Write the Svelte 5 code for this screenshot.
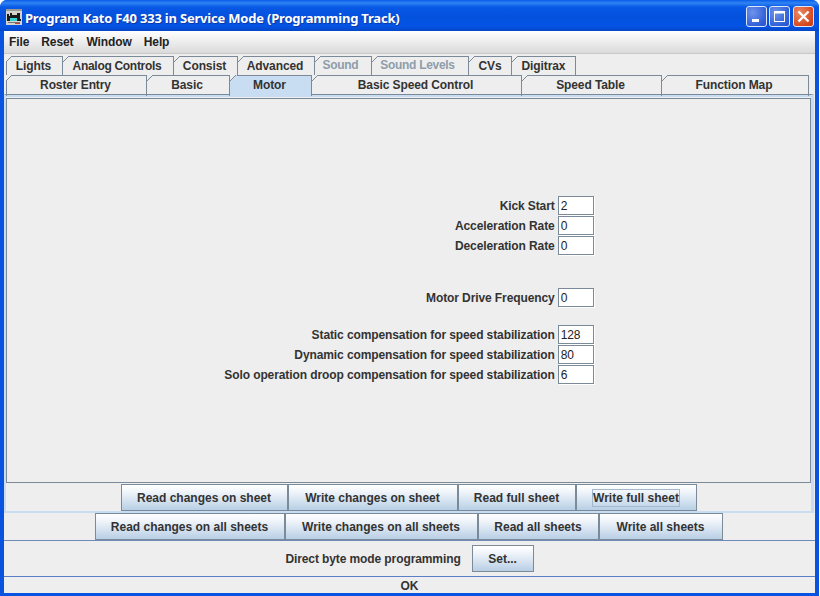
<script>
  const menus = ['File', 'Reset', 'Window', 'Help'];
  const tabsTop = [
    { t: 'Lights' }, { t: 'Analog Controls', tight: true }, { t: 'Consist' }, { t: 'Advanced' },
    { t: 'Sound', off: true }, { t: 'Sound Levels', off: true }, { t: 'CVs' }, { t: 'Digitrax' }
  ];
  const tabsBottom = [
    { t: 'Roster Entry' }, { t: 'Basic' }, { t: 'Motor', sel: true },
    { t: 'Basic Speed Control' }, { t: 'Speed Table' }, { t: 'Function Map' }
  ];
  const groups = [
    [['Kick Start', '2'], ['Acceleration Rate', '0'], ['Deceleration Rate', '0']],
    [['Motor Drive Frequency', '0']],
    [['Static compensation for speed stabilization', '128'], ['Dynamic compensation for speed stabilization', '80'], ['Solo operation droop compensation for speed stabilization', '6']]
  ];
</script>

<div class="window">
  <header class="title">
    <svg class="appicon" viewBox="0 0 16 16" width="16" height="16" aria-hidden="true">
      <rect width="16" height="16" fill="#d4d4cc"/>
      <rect x="0" y="0" width="16" height="2" fill="#9a9a94"/>
      <path d="M1 5h2v2h1V4h2v2h5V4h3v6h1v2H1z" fill="#1a1a1a"/>
      <rect x="4" y="9" width="7" height="3" fill="#35d3d3"/>
      <rect x="2" y="13" width="12" height="1" fill="#777"/>
      <rect x="9" y="14" width="5" height="1" fill="#c04040"/>
    </svg>
    <span class="title-text">Program Kato F40 333 in Service Mode (Programming Track)</span>
    <div class="winbtns">
      <span class="wb"><svg viewBox="0 0 19 19" width="19" height="19" aria-hidden="true"><rect x="5" y="12" width="7" height="3" fill="#fff"/></svg></span>
      <span class="wb"><svg viewBox="0 0 19 19" width="19" height="19" aria-hidden="true"><rect x="4.5" y="4.5" width="10" height="10" fill="none" stroke="#fff"/><rect x="4" y="4" width="11" height="2.5" fill="#fff"/></svg></span>
      <span class="wb close"><svg viewBox="0 0 19 19" width="19" height="19" aria-hidden="true"><path d="M4.5 4.5l10 10M14.5 4.5l-10 10" stroke="#fff" stroke-width="2.4"/></svg></span>
    </div>
  </header>

  <div class="body">
    <nav class="menubar">
      {#each menus as m}<span class="menu">{m}</span>{/each}
    </nav>

    <div class="tabs tabs-top">
      {#each tabsTop as tab}
        <div class="tab" class:off={tab.off} class:tight={tab.tight}>{tab.t}</div>
      {/each}
    </div>
    <div class="tabs tabs-bottom">
      {#each tabsBottom as tab}
        <div class="tab" class:sel={tab.sel}>{tab.t}</div>
      {/each}
    </div>

    <section class="pane">
      <div class="panel">
        <div class="form">
          {#each groups as g}
            <div class="group">
              {#each g as [label, value]}
                <span class="lbl">{label}</span>
                <span class="field">{value}</span>
              {/each}
            </div>
          {/each}
        </div>
      </div>
      <div class="btnrow row-a">
        <button>Read changes on sheet</button>
        <button>Write changes on sheet</button>
        <button>Read full sheet</button>
        <button><span class="focus">Write full sheet</span></button>
      </div>
    </section>

    <div class="btnrow row-b">
      <button>Read changes on all sheets</button>
      <button>Write changes on all sheets</button>
      <button>Read all sheets</button>
      <button>Write all sheets</button>
    </div>

    <div class="direct">
      <span>Direct byte mode programming</span>
      <button class="set">Set...</button>
    </div>

    <footer class="status">OK</footer>
  </div>
</div>

<style>
  :global(body) { margin: 0; background: #fff; }

  .window {
    width: 819px;
    height: 596px;
    display: flex;
    flex-direction: column;
    font: bold 12px "Liberation Sans", Arial, sans-serif;
    letter-spacing: -0.1px;
    color: #333;
    border-radius: 7px 7px 0 0;
    overflow: hidden;
    background: #0a52e0;
  }

  .title {
    height: 31px;
    flex: none;
    display: flex;
    align-items: center;
    padding: 2px 5px 0 6px;
    box-sizing: border-box;
    background: linear-gradient(#0a5be8 0, #2f84f4 3px, #0859e6 7px, #0451dd 16px, #0453e4 26px, #0447c8 31px);
  }
  .appicon { flex: none; margin-right: 3px; }
  .title-text {
    color: #fff;
    font: bold 13px "Noto Sans", sans-serif;
    letter-spacing: -0.2px;
    padding-top: 2px;
    white-space: nowrap;
    text-shadow: 1px 1px 0 #0b3aa8;
  }
  .winbtns { margin-left: auto; display: flex; gap: 3px; }
  .wb {
    box-sizing: border-box;
    width: 21px;
    height: 21px;
    border: 1px solid #dfe8fb;
    border-radius: 3px;
    background: radial-gradient(circle at 30% 30%, #6f93ea, #3160d8 70%, #2a4fc8);
    display: block;
    line-height: 0;
  }
  .wb:first-child { margin-right: -1px; }
  .close { background: radial-gradient(circle at 30% 30%, #ea8a66, #d8491f 70%, #c23a12); }

  .body {
    flex: 1;
    min-height: 0;
    margin: 0 4px 3px 4px;
    background: #eeeeee;
    display: flex;
    flex-direction: column;
  }

  .menubar {
    height: 23px;
    flex: none;
    box-sizing: border-box;
    display: flex;
    align-items: center;
    padding: 0 0 1px 5px;
    gap: 12px;
    background: linear-gradient(#ffffff, #dadada);
    border-bottom: 1px solid #c8c8c8;
    color: #222;
  }
  .menu:nth-child(3) { margin-left: 1px; }

  .tabs {
    display: grid;
    height: 19px;
    flex: none;
    padding-left: 2px;
  }
  .tabs-top { margin-top: 2px; grid-template-columns: 57px 111px 64px 77px 57px 97px 43px 64px; }
  .tabs-bottom { grid-template-columns: 141px 83px 82px 210px 140px 147px; }

  .tab {
    position: relative;
    box-sizing: border-box;
    border-top: 1px solid #7a8a99;
    border-right: 1px solid #7a8a99;
    padding-right: 2px;
    text-align: center;
    line-height: 19px;
    white-space: nowrap;
  }
  .tabs-top .tab:nth-child(n+7) { padding-right: 0; }
  .tab:first-child { border-left: 1px solid #7a8a99; }
  .tab::before {
    content: "";
    position: absolute;
    left: 0;
    top: -1px;
    width: 7px;
    height: 7px;
    background: linear-gradient(135deg, #eeeeee 0, #eeeeee 3.6px, #7a8a99 3.6px, #7a8a99 4.6px, transparent 4.6px);
  }
  .tab:first-child::before { left: -1px; }
  .tight { letter-spacing: -0.3px; }
  .off { color: #8f9dab; line-height: 17px; letter-spacing: -0.3px; padding-right: 5px; }
  .sel {
    background: #c8ddf2;
    height: 21px;
    z-index: 1;
  }
  .sel::before {
    background: linear-gradient(135deg, #eeeeee 0, #eeeeee 3.6px, #7a8a99 3.6px, #7a8a99 4.6px, #c8ddf2 4.6px);
  }

  .pane {
    margin-right: 1px;
    height: 419px;
    flex: none;
    box-sizing: border-box;
    border-top: 1px solid #7a8a99;
    border-left: 2px solid #c8ddf2;
    border-right: 3px solid #c8ddf2;
    border-bottom: 2px solid #c8ddf2;
    box-shadow: inset 0 2px 0 #c8ddf2;
    padding-top: 3px;
    display: flex;
    flex-direction: column;
  }
  .panel {
    height: 385px;
    flex: none;
    box-sizing: border-box;
    border: 1px solid #7a8a99;
    padding-bottom: 2px;
    display: flex;
    align-items: center;
    justify-content: center;
  }
  .form {
    display: flex;
    flex-direction: column;
    gap: 32px;
    margin-left: 1px;
  }
  .form .group:last-child { margin-top: -15px; }
  .group {
    display: grid;
    grid-template-columns: 1fr 36px;
    grid-auto-rows: 20px;
    column-gap: 3px;
    justify-items: end;
    align-items: center;
  }
  .lbl { white-space: nowrap; padding-top: 2px; }
  .field {
    box-sizing: border-box;
    width: 36px;
    height: 19px;
    border: 1px solid #7a8a99;
    background: #fff;
    box-shadow: 1px 1px 0 #fff;
    font-weight: normal;
    line-height: 17px;
    padding: 1px 0 0 2px;
    color: #222;
    justify-self: start;
  }

  .btnrow { display: grid; justify-content: center; height: 27px; flex: none; }
  .row-a { grid-template-columns: 167px 170px 118px 121px; margin-top: 1px; }
  .row-b { grid-template-columns: 190px 193px 121px 124px; padding-right: 2px; }

  button {
    box-sizing: border-box;
    height: 27px;
    padding: 0;
    border: 1px solid #7a8a99;
    background: linear-gradient(#ffffff 0, #f2f6fb 25%, #b8cfe5 100%);
    font: bold 12px "Liberation Sans", Arial, sans-serif;
    color: #333;
    white-space: nowrap;
  }
  .focus { border: 1px solid #a3b8cc; padding: 1px 0; display: inline-block; line-height: 14px; }

  .direct {
    height: 37px;
    flex: none;
    box-sizing: border-box;
    border-top: 1px solid #6f8ab8;
    border-bottom: 1px solid #5a7fc8;
    display: flex;
    align-items: center;
    justify-content: center;
    gap: 11px;
  }
  .set { width: 62px; }

  .status {
    flex: 1;
    text-align: center;
    line-height: 18px;
  }
</style>
